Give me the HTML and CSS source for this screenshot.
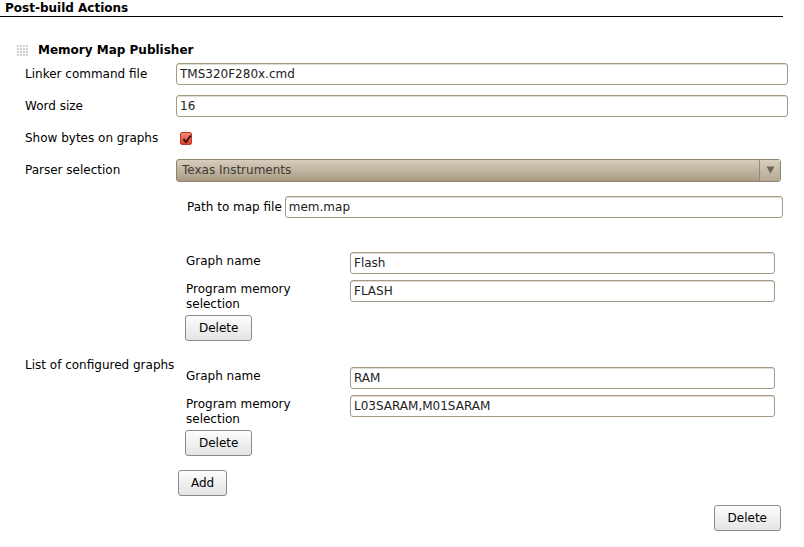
FILE: index.html
```html
<!DOCTYPE html>
<html>
<head>
<meta charset="utf-8">
<link rel="stylesheet" href="styles.css">
</head>
<body>
<div class="section-head">Post-build Actions</div>
<div class="publisher">
  <div class="pub-title">
    <span class="grip"></span>
    <span>Memory Map Publisher</span>
  </div>
  <div class="row">
    <div class="label">Linker command file</div>
    <div class="field"><input class="text" value="TMS320F280x.cmd"></div>
  </div>
  <div class="row">
    <div class="label">Word size</div>
    <div class="field"><input class="text" value="16"></div>
  </div>
  <div class="row">
    <div class="label">Show bytes on graphs</div>
    <div class="field"><span class="check"><svg width="12" height="12" viewBox="0 0 12 12"><path d="M2.5 6.2 L5 9 L9.8 2.5" fill="none" stroke="#3a0b05" stroke-width="1.8"/></svg></span></div>
  </div>
  <div class="row">
    <div class="label">Parser selection</div>
    <div class="field field-select">
      <div class="select"><span class="select-text">Texas Instruments</span><span class="select-btn"><svg width="9" height="8" viewBox="0 0 9 8"><path d="M0.5 0.5 H8.5 L4.5 7.5 Z" fill="#6b6459"/></svg></span></div>
    </div>
  </div>
  <div class="row row-sub">
    <div class="label"></div>
    <div class="field sub-path">
      <span class="sublabel">Path to map file</span>
      <input class="text" value="mem.map">
    </div>
  </div>
  <div class="row row-graphs">
    <div class="label label-graphs">List of configured graphs</div>
    <div class="field graphs">
      <div class="graph">
        <div class="graph-row">
          <div class="glabel">Graph name</div>
          <input class="text" value="Flash">
        </div>
        <div class="graph-row graph-row-prog">
          <div class="glabel">Program memory selection</div>
          <input class="text" value="FLASH">
        </div>
        <button class="btn">Delete</button>
      </div>
      <div class="graph">
        <div class="graph-row">
          <div class="glabel">Graph name</div>
          <input class="text" value="RAM">
        </div>
        <div class="graph-row graph-row-prog">
          <div class="glabel">Program memory selection</div>
          <input class="text" value="L03SARAM,M01SARAM">
        </div>
        <button class="btn">Delete</button>
      </div>
      <button class="btn btn-add">Add</button>
    </div>
  </div>
  <div class="bottom">
    <button class="btn">Delete</button>
  </div>
</div>
</body>
</html>
```
FILE: styles.css
```css
* { box-sizing: border-box; }
body {
  margin: 0;
  background: #fff;
  font-family: "DejaVu Sans", Verdana, sans-serif;
  font-size: 12px;
  color: #000;
}
.section-head {
  font-weight: bold;
  font-size: 12px;
  width: 783px;
  padding: 1px 0 1px 5px;
  line-height: 14px;
  border-bottom: 1px solid #000;
}
.publisher {
  padding: 23px 16px 0 0;
}
.pub-title {
  display: flex;
  align-items: center;
  font-weight: bold;
  height: 18px;
  padding-top: 2px;
  margin-left: 17px;
}
.grip {
  width: 12px;
  height: 12px;
  margin-right: 9px;
  background-image:
    linear-gradient(90deg, transparent 2px, #fff 2px),
    linear-gradient(0deg, transparent 2px, #fff 2px);
  background-size: 3px 3px;
  background-color: #cfcfcf;
}
.row {
  display: flex;
  align-items: center;
  height: 32px;
}
.label {
  width: 151px;
  flex: none;
  margin-left: 25px;
}
.field {
  flex: 1;
  display: flex;
  align-items: center;
}
.text {
  font-family: "DejaVu Sans", Verdana, sans-serif;
  font-size: 12px;
  height: 22px;
  width: 100%;
  border: 1px solid #a59a85;
  border-radius: 3px;
  padding: 0 3px;
  color: #222;
  background: #fff;
  outline: none;
  box-shadow: inset 0 1px 0 #e2dbcf;
}
.check {
  display: inline-block;
  width: 12px;
  height: 13px;
  margin-left: 4px;
  border-radius: 2px;
  background: linear-gradient(#f08a76, #de3f2b);
  border: 1px solid #c43a28;
}
.check svg { display: block; }
.field-select { padding-right: 7px; }
.select {
  flex: 1;
  height: 23px;
  display: flex;
  align-items: center;
  border: 1px solid #8e836f;
  border-radius: 3px;
  background: linear-gradient(#d6cdbd, #aa9c83);
  color: #3e3a34;
}
.select-text { flex: 1; padding-left: 5px; }
.select-btn {
  width: 21px;
  height: 100%;
  display: flex;
  align-items: center;
  justify-content: center;
  border-left: 1px solid #978b77;
  background: linear-gradient(#d8cfc0, #b5a891);
}
.row-sub {
  height: 22px;
  margin-top: 10px;
}
.sub-path {
  padding-left: 11px;
  padding-right: 5px;
}
.sublabel { margin-right: 3px; white-space: nowrap; }
.row-graphs {
  height: auto;
  align-items: flex-start;
  padding-top: 34px;
}
.label-graphs {
  margin-top: 106px;
  line-height: 14px;
}
.graphs {
  flex-direction: column;
  align-items: flex-start;
}
.graph {
  width: 100%;
  padding-left: 10px;
  padding-right: 13px;
  margin-bottom: 26px;
}
.graph-row {
  display: flex;
  align-items: flex-start;
  margin-bottom: 6px;
}
.graph-row-prog { margin-bottom: 3px; }
.glabel {
  width: 164px;
  padding-right: 44px;
  padding-top: 2px;
  flex: none;
  line-height: 15px;
}
.graph .btn { display: block; margin-left: -1px; }
.btn {
  font-family: "DejaVu Sans", Verdana, sans-serif;
  font-size: 12px;
  height: 26px;
  padding: 0 13px;
  border: 1px solid #8c8c8c;
  border-radius: 3px;
  background: linear-gradient(#fdfdfd, #e4e4e4);
  color: #000;
}
.graph:nth-of-type(2) { margin-bottom: 14px; }
.btn-add {
  margin-left: 2px;
  padding: 0 12px;
}
.bottom {
  display: flex;
  justify-content: flex-end;
  padding-right: 7px;
  margin-top: 9px;
}
```
